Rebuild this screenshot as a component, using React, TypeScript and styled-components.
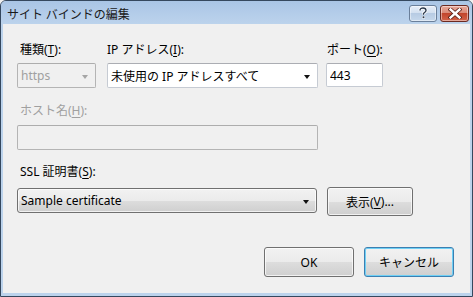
import React from "react";
import styled, { createGlobalStyle } from "styled-components";

const Global = createGlobalStyle`
  html, body { margin: 0; padding: 0; background: #f0f0f0; }
  body { font-family: "Noto Sans", "Noto Sans CJK JP", sans-serif; font-size: 12px; color: #000; }
`;

const FONT = `"Noto Sans", "Noto Sans CJK JP", sans-serif`;

const Window = styled.div`
  box-sizing: border-box;
  width: 473px;
  height: 297px;
  border: 1px solid #35485e;
  border-radius: 6px 6px 0 0;
  background: #bcd3ec;
  display: flex;
  flex-direction: column;
  overflow: hidden;
`;

const TitleBar = styled.div`
  height: 23px;
  flex: none;
  display: flex;
  align-items: center;
  padding: 0 3px 0 6px;
  background: linear-gradient(#a9c5e5 0%, #b3cce9 50%, #bcd3ec 100%);
`;

const Title = styled.div`
  flex: 1;
  font-family: "Noto Sans CJK JP", sans-serif;
  font-size: 12px;
  line-height: 16px;
  color: #1a1a1a;
  margin-top: 2px;
`;

const CaptionButton = styled.div<{ $close?: boolean }>`
  box-sizing: border-box;
  width: ${(p) => (p.$close ? 29 : 28)}px;
  height: 17px;
  margin-left: ${(p) => (p.$close ? 3 : 0)}px;
  margin-top: 1px;
  border: 1px solid ${(p) => (p.$close ? "#6b2a22" : "#6a7f9a")};
  border-radius: 3px;
  display: flex;
  align-items: center;
  justify-content: center;
  background: ${(p) =>
    p.$close
      ? "linear-gradient(#e9a99b 0%, #d98a78 45%, #c2452c 50%, #d2634a 100%)"
      : "linear-gradient(#e7eef8 0%, #d3e0f0 45%, #b7cbe3 50%, #c6d8ec 100%)"};
  box-shadow: inset 0 0 0 1px rgba(255, 255, 255, 0.45);
`;

const Body = styled.div`
  flex: 1;
  display: flex;
  padding: 0 2px 3px 2px;
`;

const Client = styled.div`
  flex: 1;
  background: #f0f0f0;
  display: flex;
  flex-direction: column;
  padding: 18px 16px 0 14px;
`;

const Row = styled.div<{ $gap?: number; $mt?: number }>`
  display: flex;
  gap: ${(p) => p.$gap ?? 0}px;
  margin-top: ${(p) => p.$mt ?? 0}px;
  align-items: flex-start;
`;

const Field = styled.div<{ $w: number; $ml?: number }>`
  width: ${(p) => p.$w}px;
  margin-left: ${(p) => p.$ml ?? 0}px;
  display: flex;
  flex-direction: column;
`;

const Label = styled.div<{ $indent?: number; $disabled?: boolean; $mt?: number }>`
  font-family: ${FONT};
  font-size: 12px;
  line-height: 16px;
  height: 16px;
  padding-left: ${(p) => p.$indent ?? 0}px;
  margin-top: ${(p) => p.$mt ?? 0}px;
  color: ${(p) => (p.$disabled ? "#a0a0a0" : "#000")};
  white-space: nowrap;
  u { text-decoration: underline; text-underline-offset: 2px; }
`;

const Box = styled.div<{ $w?: number; $h?: number; $disabled?: boolean; $mt?: number }>`
  box-sizing: border-box;
  width: ${(p) => (p.$w ? `${p.$w}px` : "100%")};
  height: ${(p) => p.$h ?? 25}px;
  margin-top: ${(p) => p.$mt ?? 5}px;
  border: 1px solid ${(p) => (p.$disabled ? "#b4b4b4" : "#c6cbd3")};
  border-top-color: ${(p) => (p.$disabled ? "#adadad" : "#abadb3")};
  border-radius: 2px;
  background: ${(p) => (p.$disabled ? "#f0f0f0" : "#fff")};
  display: flex;
  align-items: center;
  padding: 0 7px 0 3px;
  font-family: ${FONT};
  font-size: 12px;
  color: ${(p) => (p.$disabled ? "#a0a0a0" : "#000")};
  white-space: nowrap;
  overflow: hidden;
`;

const ComboText = styled.span`
  flex: 1;
  overflow: hidden;
`;

const Arrow = styled.span<{ $disabled?: boolean }>`
  width: 0;
  height: 0;
  border-left: 3.5px solid transparent;
  border-right: 3.5px solid transparent;
  border-top: 4px solid ${(p) => (p.$disabled ? "#a5a5a5" : "#111")};
  margin-top: 2px;
`;

const SelectButton = styled.div<{ $w: number }>`
  box-sizing: border-box;
  width: ${(p) => p.$w}px;
  height: 25px;
  margin-top: 1px;
  border: 1px solid #707070;
  border-radius: 3px;
  background: linear-gradient(#f2f2f2 0%, #ebebeb 50%, #dddddd 51%, #cfcfcf 100%);
  box-shadow: inset 0 0 0 1px rgba(255, 255, 255, 0.7);
  display: flex;
  align-items: center;
  padding: 0 7px 0 3px;
  font-family: ${FONT};
  font-size: 12px;
  color: #000;
`;

const Button = styled.div<{ $w: number; $h: number; $default?: boolean }>`
  box-sizing: border-box;
  width: ${(p) => p.$w}px;
  height: ${(p) => p.$h}px;
  border: 1px solid ${(p) => (p.$default ? "#3c7fb1" : "#707070")};
  border-radius: 3px;
  background: linear-gradient(#f2f2f2 0%, #ebebeb 50%, #dddddd 51%, #cfcfcf 100%);
  box-shadow: inset 0 0 0 1px ${(p) => (p.$default ? "#6fd0f5" : "rgba(255,255,255,0.7)")};
  display: flex;
  align-items: center;
  justify-content: center;
  font-family: ${FONT};
  font-size: 12px;
  color: #000;
  u { text-decoration: underline; text-underline-offset: 2px; }
`;

const ButtonBar = styled.div`
  display: flex;
  justify-content: flex-end;
  gap: 10px;
  margin-top: 31px;
`;

const U = styled.u``;

export default function App() {
  return (
    <>
      <Global />
      <Window>
        <TitleBar>
          <Title>サイト バインドの編集</Title>
          <CaptionButton>
            <svg width="10" height="12" viewBox="0 0 10 12">
              <path
                d="M2 3.5 C2 1.5 3.5 1 5 1 C6.8 1 8 2 8 3.5 C8 5 6 5.5 5.5 6.5 L5.5 7.8"
                fill="none"
                stroke="#fff"
                strokeWidth="3"
              />
              <rect x="4" y="9" width="3" height="2.5" fill="#fff" />
              <path
                d="M2 3.5 C2 1.5 3.5 1 5 1 C6.8 1 8 2 8 3.5 C8 5 6 5.5 5.5 6.5 L5.5 7.8"
                fill="none"
                stroke="#2d3b4e"
                strokeWidth="1.4"
              />
              <rect x="4.6" y="9.3" width="1.8" height="1.8" fill="#2d3b4e" />
            </svg>
          </CaptionButton>
          <CaptionButton $close>
            <svg width="14" height="11" viewBox="0 0 14 11">
              <path d="M2.5 1.5 L11.5 9.5 M11.5 1.5 L2.5 9.5" stroke="#5a2017" strokeWidth="4" strokeLinecap="square" />
              <path d="M2.5 1.5 L11.5 9.5 M11.5 1.5 L2.5 9.5" stroke="#fff" strokeWidth="2.4" strokeLinecap="square" />
            </svg>
          </CaptionButton>
        </TitleBar>
        <Body>
          <Client>
            <Row $gap={11}>
              <Field $w={79}>
                <Label $indent={3}>
                  種類(<U>T</U>):
                </Label>
                <Box $disabled>
                  <ComboText>https</ComboText>
                  <Arrow $disabled />
                </Box>
              </Field>
              <Field $w={211}>
                <Label>
                  IP アドレス(<U>I</U>):
                </Label>
                <Box>
                  <ComboText>未使用の IP アドレスすべて</ComboText>
                  <Arrow />
                </Box>
              </Field>
              <Field $w={57} $ml={-3}>
                <Label $indent={1}>
                  ポート(<U>O</U>):
                </Label>
                <Box $h={24}>
                  <ComboText>443</ComboText>
                </Box>
              </Field>
            </Row>
            <Label $indent={3} $disabled $mt={15}>
              ホスト名(<U>H</U>):
            </Label>
            <Box $w={301} $disabled $mt={6} />
            <Label $indent={3} $mt={14}>
              SSL 証明書(<U>S</U>):
            </Label>
            <Row $gap={10} $mt={7}>
              <SelectButton $w={300}>
                <ComboText>Sample certificate</ComboText>
                <Arrow />
              </SelectButton>
              <Button $w={86} $h={29}>
                表示(<u>V</u>)...
              </Button>
            </Row>
            <ButtonBar>
              <Button $w={90} $h={30}>OK</Button>
              <Button $w={90} $h={30} $default>
                キャンセル
              </Button>
            </ButtonBar>
          </Client>
        </Body>
      </Window>
    </>
  );
}
